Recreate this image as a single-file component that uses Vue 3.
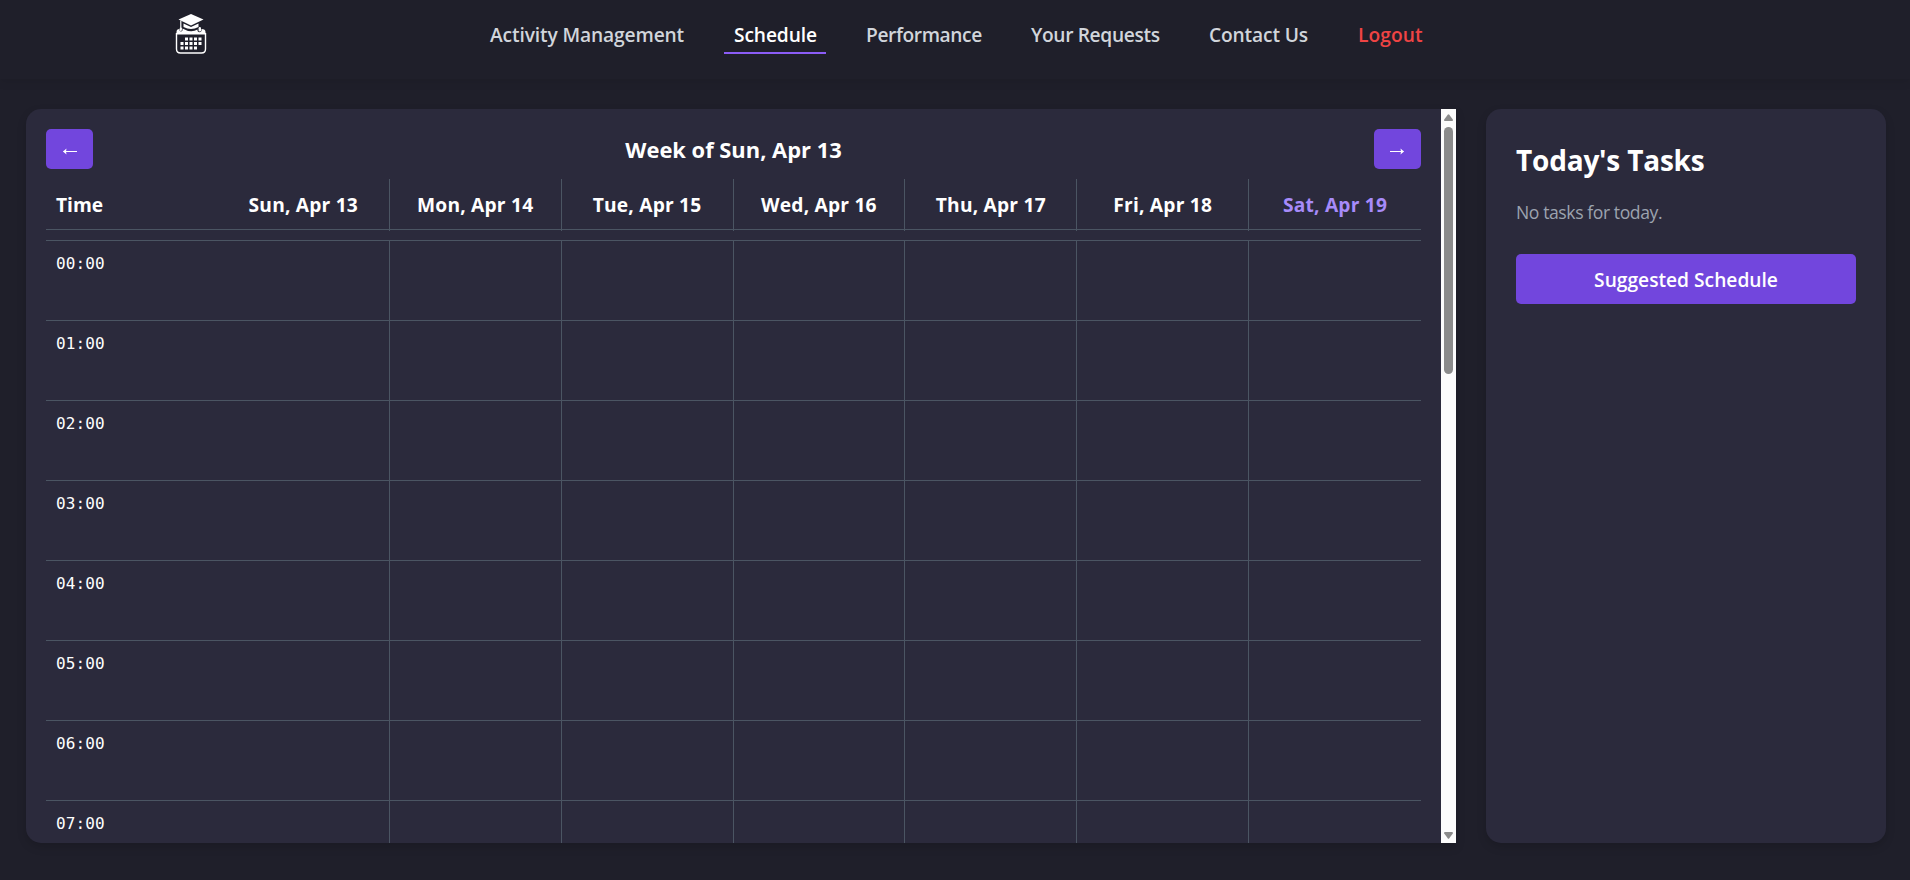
<script setup>
const links = [
  { label: 'Activity Management', cls: 'l-activity' },
  { label: 'Schedule', cls: 'l-schedule active' },
  { label: 'Performance', cls: 'l-performance' },
  { label: 'Your Requests', cls: 'l-requests' },
  { label: 'Contact Us', cls: 'l-contact' },
  { label: 'Logout', cls: 'l-logout' },
]
const days = ['Sun, Apr 13', 'Mon, Apr 14', 'Tue, Apr 15', 'Wed, Apr 16', 'Thu, Apr 17', 'Fri, Apr 18', 'Sat, Apr 19']
const hours = Array.from({ length: 8 }, (_, i) => String(i).padStart(2, '0') + ':00')
</script>

<template>
  <div class="page">
    <header class="navbar">
      <svg class="logo" width="34" height="44" viewBox="0 0 34 44">
        <path d="M17 2 L29.500 7.500 L17 13.500 L4.500 7.500 Z" fill="#fff" />
        <path d="M9.500 11.500 L17 15 L24.500 11.500 V15 Q17 19 9.500 15 Z" fill="#fff" />
        <path d="M6.800 8.500 V17" stroke="#fff" stroke-width="1.200" />
        <path d="M2.500 22.500 V20 Q2.500 17 5.500 17 V18.500 Q7 20.500 8.500 18.500 V16.500 Q17 21.500 23.500 17.500 V19 Q25.500 21.500 27.500 19 V17 Q31.500 17 31.500 20 V22.500 Z" fill="#fff" />
        <rect x="24.600" y="15" width="2.400" height="4.500" rx="1.200" fill="#fff" />
        <rect x="5.700" y="15.500" width="2.200" height="3.500" rx="1" fill="#fff" />
        <path d="M2.500 21 V37 Q2.500 41 6.500 41 H27.500 Q31.500 41 31.500 37 V21" fill="none" stroke="#fff" stroke-width="1.400" />
        <g fill="#fff">
          <rect x="11" y="25.500" width="3" height="3" /><rect x="15.500" y="25.500" width="3" height="3" /><rect x="20" y="25.500" width="3" height="3" /><rect x="24.500" y="25.500" width="3" height="3" />
          <rect x="6.500" y="30" width="3" height="3" /><rect x="11" y="30" width="3" height="3" /><rect x="15.500" y="30" width="3" height="3" /><rect x="20" y="30" width="3" height="3" /><rect x="24.500" y="30" width="3" height="3" />
          <rect x="6.500" y="34.500" width="3" height="3" /><rect x="11" y="34.500" width="3" height="3" /><rect x="15.500" y="34.500" width="3" height="3" /><rect x="20" y="34.500" width="3" height="3" />
        </g>
      </svg>
      <nav>
        <a v-for="l in links" :key="l.label" :class="l.cls"><span>{{ l.label }}</span></a>
      </nav>
    </header>

    <main>
      <section class="calendar">
        <div class="cal-body">
          <div class="week">
            <button class="arrow" aria-label="Previous week"><svg width="16" height="10" viewBox="0 0 16 10"><path d="M1.500 5.500 H15" stroke="#fff" /><path d="M1 5.500 L4.500 2.500 L4 5.500 L4.500 8.500 Z" fill="#fff" /></svg></button>
            <h2><span>Week of Sun, Apr 13</span></h2>
            <button class="arrow next" aria-label="Next week"><svg width="16" height="10" viewBox="0 0 16 10"><path d="M1 5.500 H14.500" stroke="#fff" /><path d="M15 5.500 L11.500 2.500 L12 5.500 L11.500 8.500 Z" fill="#fff" /></svg></button>
          </div>
          <div class="row head">
            <div class="time">Time</div>
            <div v-for="(d, i) in days" :key="d" class="day" :class="{ today: i === 6 }"><span>{{ d }}</span></div>
          </div>
          <div class="hours">
            <div v-for="h in hours" :key="h" class="row hour">
              <div class="time">{{ h }}</div>
              <div v-for="d in days" :key="d" class="cell"></div>
            </div>
          </div>
        </div>
        <div class="scroll">
          <svg width="9" height="7" viewBox="0 0 9 7"><path d="M3.700 .7 Q4.500 -.3 5.300 .7 L8.800 5.500 Q9.200 7 8 7 H1 Q-.2 7 .2 5.500 Z" fill="#8b8b8b" /></svg>
          <div class="thumb"></div>
          <svg class="down" width="9" height="7" viewBox="0 0 9 7"><path d="M3.700 6.300 Q4.500 7.300 5.300 6.300 L8.800 1.500 Q9.200 0 8 0 H1 Q-.2 0 .2 1.500 Z" fill="#8b8b8b" /></svg>
        </div>
      </section>

      <aside>
        <h1><span>Today's Tasks</span></h1>
        <p>No tasks for today.</p>
        <button class="suggest">Suggested Schedule</button>
      </aside>
    </main>
  </div>
</template>

<style>
html, body { margin: 0; background: #1f1f2a; overflow: hidden; }
</style>

<style scoped>
* { box-sizing: border-box; }
.page { height: 880px; overflow: hidden; background: #1f1f2a; color: #fff; font-family: "Open Sans", "Noto Sans", sans-serif; }
.navbar { height: 79px; display: flex; align-items: flex-start; padding: 12px 0 0 174px; background: #1f1f2a; box-shadow: 0 2px 10px rgba(0, 0, 0, .1); }
.logo { flex: none; }
nav { display: flex; gap: 30px; margin: 4px 0 0 272px; }
nav a { height: 38px; padding: 0 10px; font-size: 19.2px; font-weight: 600; line-height: 38px; color: #d1d5db; white-space: nowrap; border-bottom: 2px solid transparent; }
nav .active { color: #fff; border-color: #8b5cf6; }
nav .l-logout { color: #ef4444; letter-spacing: .08px; }
.l-activity { width: 214px; letter-spacing: -.13px; }
.l-schedule { width: 102px; letter-spacing: -.12px; }
.l-performance { width: 135px; letter-spacing: -.4px; }
.l-requests { width: 148px; letter-spacing: -.36px; }
.l-contact { width: 119px; letter-spacing: -.15px; }
.l-logout { width: 85px; }
main { display: flex; gap: 30px; padding: 30px 24px 0 26px; }
.calendar { width: 1430px; height: 734px; display: flex; overflow: hidden; background: #2b2a3c; border-radius: 15px 0 0 15px; box-shadow: 0 4px 10px rgba(0, 0, 0, .15); }
.cal-body { flex: 1; padding: 20px; overflow: hidden; }
.week { display: flex; justify-content: space-between; align-items: center; height: 40px; margin-bottom: 10px; }
.week h2 { margin: 0; padding-top: 2px; font-size: 21.9px; font-weight: 700; white-space: nowrap; line-height: 38px; }
button { border: 0; padding: 0; color: #fff; background: #7246dd; border-radius: 5px; font-family: inherit; }
.arrow { width: 47px; height: 40px; display: flex; align-items: center; justify-content: center; padding-top: 4px; }
.row { display: grid; grid-template-columns: repeat(8, 1fr); }
.head { height: 51px; margin-bottom: 10px; border-bottom: 1px solid #4b5563; font-size: 19.2px; font-weight: 700; line-height: 52px; }
.head .time { padding-left: 10px; }
.day { text-align: center; border-right: 1px solid #4b5563; white-space: nowrap; letter-spacing: .2px; }
.head .day:last-child, .cell:last-child { border-right: 0; }
.today { color: #a78bfa; }
.hour { height: 80px; border-top: 1px solid #4b5563; }
.hour .time { padding: 10px; font: 16px/26px "DejaVu Sans Mono", monospace; letter-spacing: .1px; }
.cell { border-right: 1px solid #4b5563; }
.scroll { width: 15px; display: flex; flex-direction: column; align-items: center; padding: 5px 0 4px; background: #fcfcfc; }
.thumb { width: 9px; height: 247px; margin-top: 6px; border-radius: 5px; background: #8b8b8b; }
.down { margin-top: auto; }
aside { width: 400px; height: 734px; padding: 30px; background: #2b2a3c; border-radius: 15px; box-shadow: 0 4px 10px rgba(0, 0, 0, .15); }
h1 { margin: 0; font-size: 28px; line-height: 43px; font-weight: 700; letter-spacing: -.2px; }
p { margin: 16px 0 27px; font-size: 17.600px; line-height: 29px; color: #9ca3af; letter-spacing: -.42px; }
.suggest { display: block; width: 340px; height: 50px; padding-top: 1px; font-size: 19.2px; font-weight: 600; line-height: 49px; }
</style>
